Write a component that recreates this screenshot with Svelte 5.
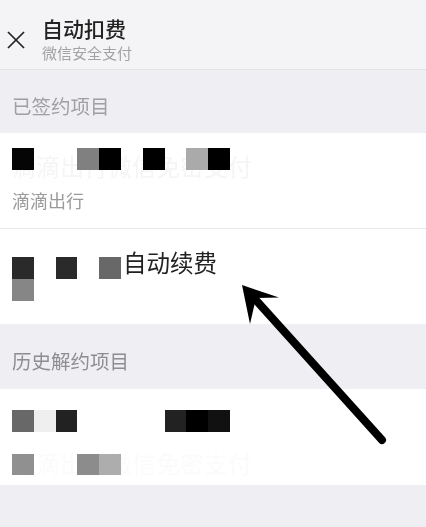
<script>
  // mosaic cells: [column, row, colour], on a 21.8px grid
  const signed = [
    [0, 0, "#050505"], [3, 0, "#808080"], [4, 0, "#000"], [6, 0, "#000"], [8, 0, "#aaa"], [9, 0, "#000"],
  ];
  const renewal = [
    [0, 0, "#2a2a2a"], [2, 0, "#2a2a2a"], [4, 0, "#686868"], [0, 1, "#868686"],
  ];
  const history = [
    [0, 0, "#686868"], [1, 0, "#efefef"], [2, 0, "#222"], [7, 0, "#222"], [8, 0, "#000"], [9, 0, "#111"],
    [0, 2, "#909090"], [3, 2, "#8c8c8c"], [4, 2, "#adadad"],
  ];
</script>

{#snippet mosaic(cells)}
  <div class="mosaic">
    {#each cells as [c, r, colour]}
      <i style="grid-column: {c + 1}; grid-row: {r + 1}; background: {colour}"></i>
    {/each}
  </div>
{/snippet}

<div class="page">
  <header class="bar">
    <svg class="close" width="18" height="18" viewBox="0 0 18 18" fill="none" stroke="#222" stroke-width="1.7">
      <line x1="1" y1="1" x2="17" y2="17" />
      <line x1="17" y1="1" x2="1" y2="17" />
    </svg>
    <div class="titles">
      <div class="title">自动扣费</div>
      <div class="subtitle">微信安全支付</div>
    </div>
  </header>

  <div class="section-label first">已签约项目</div>
  <section class="card">
    <div class="row signed">
      <div class="ghost">滴滴出行微信免密支付</div>
      <div class="merchant">滴滴出行</div>
      {@render mosaic(signed)}
    </div>
    <div class="row renewal">
      <div class="renew-text">自动续费</div>
      {@render mosaic(renewal)}
    </div>
  </section>

  <div class="section-label">历史解约项目</div>
  <section class="card">
    <div class="row past">
      <div class="ghost faint second">滴滴出行微信免密支付</div>
      {@render mosaic(history)}
    </div>
  </section>

  <svg class="arrow" width="426" height="527" viewBox="0 0 426 527">
    <line x1="382" y1="440" x2="254" y2="298" stroke="#000" stroke-width="8" stroke-linecap="round" />
    <path d="M242 285 L279 297.500 L256 298 L250 324 Z" fill="#000" />
  </svg>
</div>

<style>
  :global(body) {
    margin: 0;
  }

  .page {
    position: relative;
    width: 426px;
    height: 527px;
    overflow: hidden;
    background: #eeeef3;
    font-family: "Liberation Sans", "Noto Sans CJK SC", sans-serif;
    filter: blur(0.4px);
  }

  .bar {
    display: flex;
    align-items: center;
    gap: 17px;
    box-sizing: border-box;
    height: 70px;
    padding: 8px 7px 0;
    background: #f4f4f6;
    border-bottom: 1px solid #e4e4e6;
  }

  .close {
    margin-top: 3px;
    flex-shrink: 0;
  }

  .titles {
    margin-top: 3px;
  }

  .title {
    font-size: 21px;
    line-height: 28px;
    font-weight: 500;
    color: #222;
  }

  .subtitle {
    font-size: 15px;
    line-height: 20px;
    color: #a3a3a6;
  }

  .section-label {
    box-sizing: border-box;
    height: 65px;
    padding: 25px 12px 0;
    font-size: 19.500px;
    line-height: 26px;
    color: #8e8e92;
  }

  .section-label.first {
    height: 63px;
    padding-top: 24px;
    color: #a0a0a4;
  }

  .card {
    background: #fff;
  }

  .row {
    position: relative;
    box-sizing: border-box;
    height: 96px;
    padding: 0 12px;
    overflow: hidden;
  }

  .signed {
    height: 96px;
    padding-top: 20px;
    border-bottom: 1px solid #e9e9ec;
  }

  .renewal {
    height: 95px;
    padding-top: 12px;
  }

  .past {
    padding-top: 20px;
  }

  .mosaic {
    position: absolute;
    left: 12px;
    display: grid;
    grid-template-columns: repeat(10, 21.800px);
    grid-auto-rows: 21.800px;
  }

  .signed .mosaic {
    top: 15px;
  }

  .renewal .mosaic {
    top: 28px;
  }

  .past .mosaic {
    top: 21px;
  }

  .ghost {
    font-size: 24px;
    line-height: 30px;
    white-space: nowrap;
    color: #f5f5f6;
  }

  .ghost.faint {
    color: #fbfbfb;
  }

  .ghost.second {
    margin-top: 41px;
  }

  .merchant {
    margin-top: 7px;
    font-size: 18px;
    line-height: 24px;
    color: #9a9a9a;
  }

  .renew-text {
    position: absolute;
    left: 123px;
    top: 20px;
    font-size: 23.500px;
    line-height: 30px;
    color: #222;
  }

  .arrow {
    position: absolute;
    left: 0;
    top: 0;
  }
</style>
